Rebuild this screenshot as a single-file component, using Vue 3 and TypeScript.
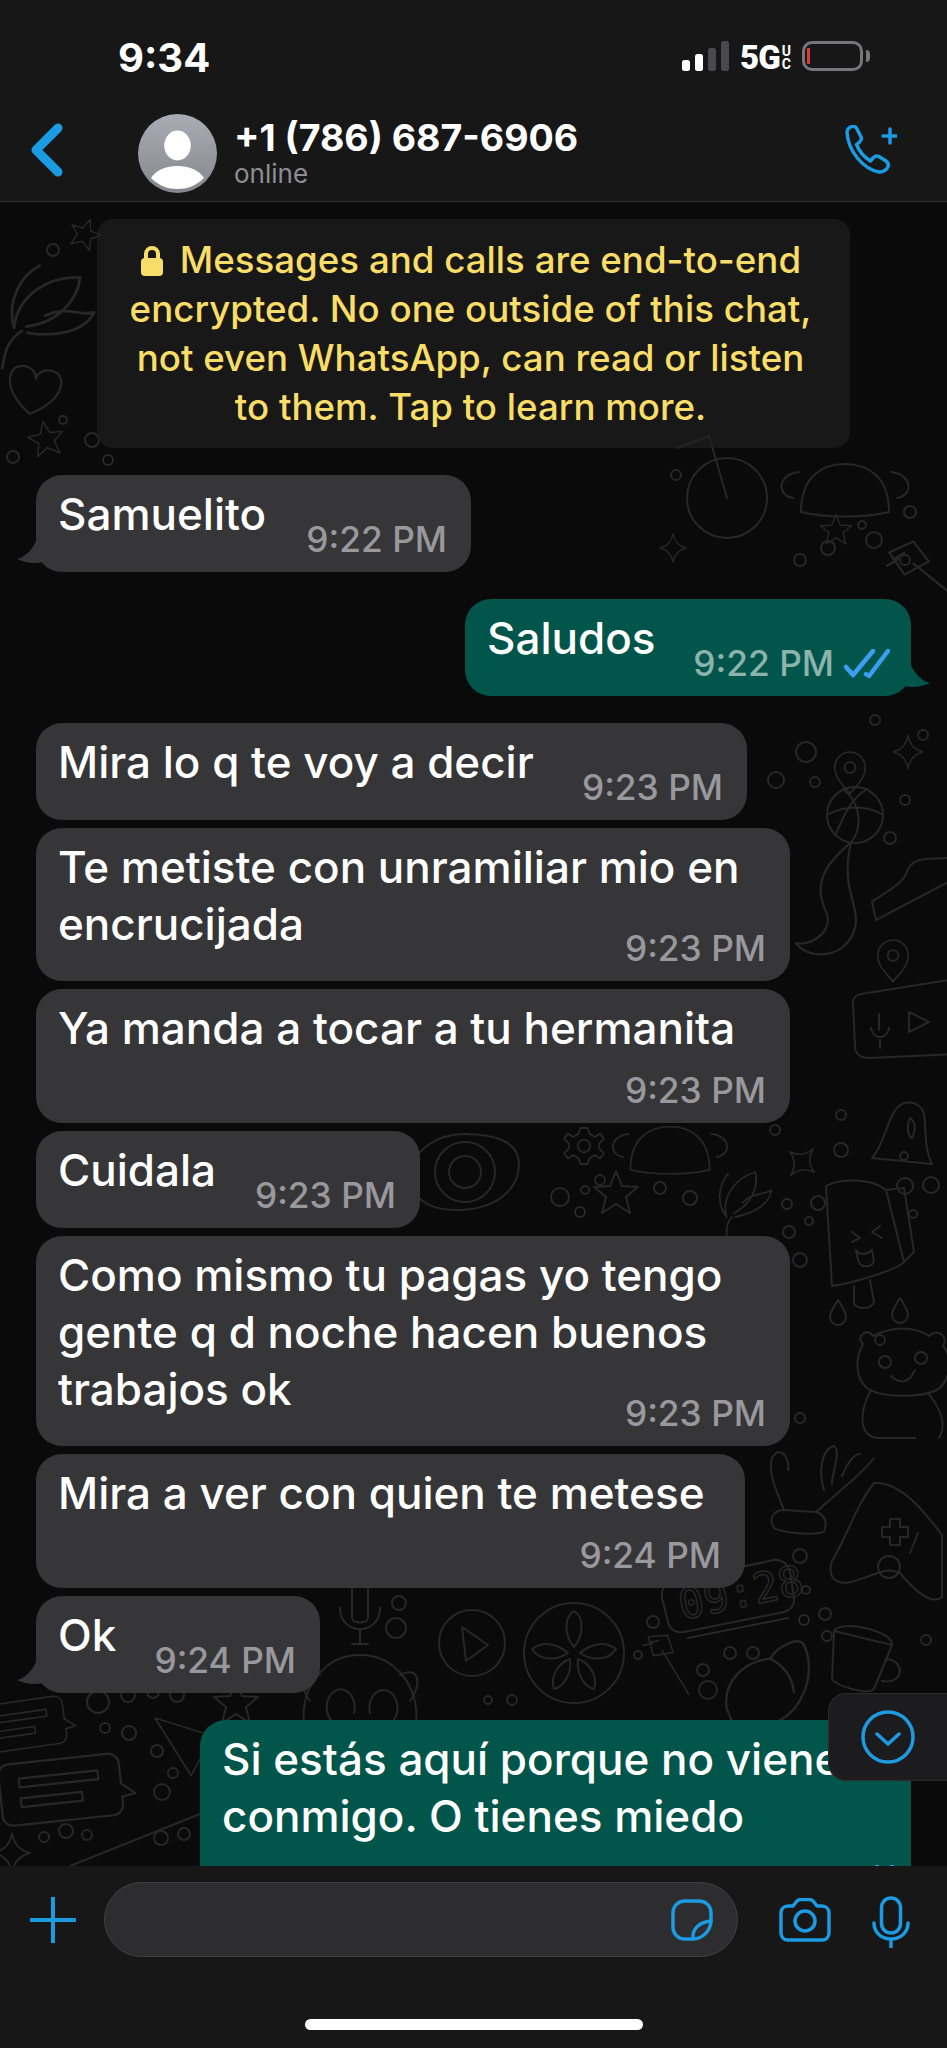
<template>
  <div class="phone">
    <header class="top">
      <div class="status">
        <span class="clock">9:34</span>
        <div class="signal">
          <i class="bar on b1"></i><i class="bar on b2"></i><i class="bar b3"></i><i class="bar b4"></i>
        </div>
        <span class="net">5G</span>
        <span class="uc"><b>U</b><b>C</b></span>
        <div class="battery"><i class="charge"></i></div>
        <i class="nub"></i>
      </div>
      <div class="nav">
        <svg class="back" viewBox="0 0 33 54"><path d="M28 5 L6 27 L28 49" /></svg>
        <svg class="avatar" viewBox="0 0 79 79">
          <defs>
            <linearGradient id="av" x1="0" y1="0" x2="0" y2="1">
              <stop offset="0" stop-color="#a9acb4" />
              <stop offset="1" stop-color="#85878e" />
            </linearGradient>
          </defs>
          <circle cx="39.5" cy="39.5" r="39.5" fill="url(#av)" />
          <ellipse cx="39.5" cy="31.5" rx="13.3" ry="15" fill="#fff" />
          <path d="M13 64 C18 56 28 52 39.5 52 C51 52 61 56 66 64 C58 72 49 75 39.5 75 C30 75 21 72 13 64Z" fill="#fff" />
        </svg>
        <div class="who">
          <div class="name">+1 (786) 687-6906</div>
          <div class="online">online</div>
        </div>
        <svg class="call" viewBox="0 0 52 50">
          <path d="M2 7 C2 4 5 2 7 1.500 C9 1 11 2 12 4 L16 12 C17 14 16 16 14 17.500 L11.500 19.500 C14 26 19 32 25.500 36 L28.500 32.500 C30 31 32 30.500 34 31.500 L41 36 C43 37.500 44 39 43 41.500 C42 44.500 38 47.500 34 47 C18 44 3 26 2 7Z" />
          <path d="M38 11 H52 M45 4 V18" />
        </svg>
      </div>
    </header>

    <main class="chat">
      <svg class="wall" viewBox="0 202 947 1664" preserveAspectRatio="none">
        <path v-for="(d, i) in doodles" :key="i" :d="shapes[d.s]" :transform="`translate(${d.x} ${d.y}) rotate(${d.r ?? 0}) scale(${d.k ?? 1})`" />
        <circle v-for="(c, i) in dots" :key="'c' + i" :cx="c[0]" :cy="c[1]" :r="c[2]" />
        <text class="wall-time" transform="translate(682 1620) rotate(-12)">09:28</text>
      </svg>

      <div class="notice">
        <svg class="lock" viewBox="0 0 24 30"><path d="M6 13 V8 A6 6 0 0 1 18 8 V13" /><rect x="1" y="12" width="22" height="18" rx="4" /></svg>
        Messages and calls are end-to-end<br>encrypted. No one outside of this chat,<br>not even WhatsApp, can read or listen<br>to them. Tap to learn more.
      </div>

      <div
        v-for="(m, i) in messages"
        :key="i"
        class="bubble"
        :class="[m.out ? 'out' : 'in', m.mode, { grouped: m.grouped }]"
        :style="{ width: m.width + 'px' }"
      >
        <svg v-if="m.tail" class="tail" viewBox="0 0 32 40"><path d="M22 0 C22 16 12 30 0 33 C10 38 24 38 32 34 Z" /></svg>
        <div class="text" v-html="m.text"></div>
        <div v-if="m.time" class="time">
          {{ m.time }}
          <svg v-if="m.out" class="ticks" viewBox="0 0 46 30"><path d="M2 18 L9 26 L29 2 M22 25 L25 27 L44 2" /></svg>
        </div>
        <svg v-if="m.mode === 'cut'" class="ticks cut-ticks" viewBox="0 0 46 30"><path d="M2 18 L9 26 L29 2 M22 25 L25 27 L44 2" /></svg>
      </div>

      <div class="scroll-down">
        <svg viewBox="0 0 54 54"><circle cx="27" cy="27" r="25" /><path d="M16 24 L27 34 L38 24" /></svg>
      </div>
    </main>

    <footer class="bottom">
      <div class="compose">
        <svg class="plus" viewBox="0 0 46 46"><path d="M23 1 V45 M1 23 H45" /></svg>
        <div class="field">
          <svg class="sticker" viewBox="0 0 42 42"><path d="M14 2 H28 C35 2 40 7 40 14 V21 C40 32 31 40 22 40 H14 C7 40 2 35 2 28 V14 C2 7 7 2 14 2Z" /><path d="M22 40 C21 30 28 23 40 22" /></svg>
        </div>
        <svg class="camera" viewBox="0 0 52 44"><path d="M9 8 H14 L18 3 C19 2 20 1.500 22 1.500 H30 C32 1.500 33 2 34 3 L38 8 H43 C47 8 50 11 50 15 V35 C50 39 47 42 43 42 H9 C5 42 2 39 2 35 V15 C2 11 5 8 9 8Z" /><circle cx="26" cy="23" r="10" /></svg>
        <svg class="mic" viewBox="0 0 38 52"><rect x="9.500" y="2" width="19" height="35" rx="9.500" /><path d="M2 27 C2 37 10 43 19 43 C28 43 36 37 36 27 M19 43 V51" /></svg>
      </div>
      <div class="home"></div>
    </footer>
  </div>
</template>

<script setup lang="ts">
interface Message {
  text: string
  time?: string
  width: number
  out?: boolean
  mode: 'inline' | 'below' | 'overlap' | 'cut'
  grouped?: boolean
  tail?: boolean
}

interface Doodle {
  s: string
  x: number
  y: number
  r?: number
  k?: number
}

const messages: Message[] = [
  { text: 'Samuelito', time: '9:22 PM', width: 435, mode: 'inline', tail: true },
  { text: 'Saludos', time: '9:22 PM', width: 446, out: true, mode: 'inline', tail: true },
  { text: 'Mira lo q te voy a decir', time: '9:23 PM', width: 711, mode: 'inline' },
  { text: 'Te metiste con unramiliar mio en<br>encrucijada', time: '9:23 PM', width: 754, mode: 'overlap', grouped: true },
  { text: 'Ya manda a tocar a tu hermanita', time: '9:23 PM', width: 754, mode: 'below', grouped: true },
  { text: 'Cuidala', time: '9:23 PM', width: 384, mode: 'inline', grouped: true },
  { text: 'Como mismo tu pagas yo tengo<br>gente q d noche hacen buenos<br>trabajos ok', time: '9:23 PM', width: 754, mode: 'overlap', grouped: true },
  { text: 'Mira a ver con quien te metese', time: '9:24 PM', width: 709, mode: 'below', grouped: true },
  { text: 'Ok', time: '9:24 PM', width: 284, mode: 'inline', grouped: true, tail: true },
  { text: 'Si estás aquí porque no vienes<br>conmigo. O tienes miedo', width: 711, out: true, mode: 'cut' },
]

// chat wallpaper, drawn in page coordinates
const shapes: Record<string, string> = {
  star: 'M0-22 L6-7 L22-6 L10 4 L14 20 L0 11 L-14 20 L-10 4 L-22-6 L-6-7Z',
  spark: 'M0-22 Q3-4 20 0 Q3 4 0 22 Q-3 4 -20 0 Q-3-4 0-22Z',
  pin: 'M0 24 C-8 14 -17 7 -17 -5 A17 17 0 0 1 17 -5 C17 7 8 14 0 24Z M6 -5 A6 6 0 1 1 -6 -5 A6 6 0 1 1 6 -5Z',
  heart: 'M0 22 C-30 4 -28 -20 -12 -20 C-5 -20 0 -15 0 -10 C0 -15 5 -20 12 -20 C28 -20 30 4 0 22Z',
  drop: 'M0-12 C5-4 8 0 8 5 A8 8 0 0 1 -8 5 C-8 0 -5-4 0-12Z',
  chat: 'M-50-26 H40 C46-26 50-22 50-16 V2 L62 12 L50 14 V20 C50 26 46 30 40 30 H-50 C-56 30 -60 26 -60 20 V-16 C-60-22 -56-26 -50-26Z M-42-12 H30 V-4 H-42Z M-42 6 H14 V14 H-42Z',
  wheel: 'M40 0 A40 40 0 1 1 -40 0 A40 40 0 1 1 40 0Z M0 0 L-18 -62 M-18 -62 L-50 -50',
  dome: 'M-44 22 C-44-14 -22-26 0-26 C22-26 44-14 44 22 C20 28 -20 28 -44 22Z M-52 8 C-70 4 -66-16 -46-18 M52 8 C70 4 66-16 46-18',
  ball: 'M28 0 A28 28 0 1 1 -28 0 A28 28 0 1 1 28 0Z M-28 0 C-10-10 12-10 28 0 M-12-26 C6-12 8 12 -4 28 M12-26 C-8-14 -14 10 -20 20',
  shoe: 'M-36 36 L36-2 L36-26 C20-24 0-30 -6-10 C-12 2 -30 10 -40 18 Z',
  voice: 'M-44-28 L56-44 V32 L-36 36 C-44 36 -50 32 -50 24 L-52-20 C-52-24 -48-28 -44-28Z M-26-8 V8 M-34 6 C-32 18 -18 18 -16 6 M-25 18 V26 M4-10 L24 0 L4 10Z',
  popsicle: 'M-36-54 C-22-62 10-62 24-50 L42 22 C36 30 -14 44 -30 46 Z M24-50 L42-52 L52 12 L42 22 M-8 46 V62 C-8 70 10 70 12 62 L8 40 M-10 -8 L-2 -2 L-10 2 M18-14 L10-8 L20-2 M-6 10 C-2 16 6 14 10 10 L12 22 C8 28 -2 28 -4 20Z',
  cat: 'M-42-36 C-50-42 -38-54 -32-44 C-12-54 10-54 24-44 C32-52 44-44 38-34 C48-22 46 0 32 10 C16 18 -24 18 -38 8 C-50-2 -50-22 -42-36Z M-20-24 A6 6 0 1 1 -20.100-24Z M16-28 A6 6 0 1 1 15.900-28Z M-14-4 C-6 4 4 4 10-10 M-34 10 C-48 36 -44 56 -28 58 H10 M24 14 C36 30 42 44 34 58',
  lemon: 'M50 0 A50 50 0 1 1 -50 0 A50 50 0 1 1 50 0Z M0-6 C-10-18 -10-36 0-42 C10-36 10-18 0-6Z M6 0 C18-10 32-12 42-4 C34 8 18 8 6 0Z M-6 0 C-18-10 -32-12 -42-4 C-34 8 -18 8 -6 0Z M4 6 C16 10 24 24 20 36 C10 34 2 20 4 6Z M-4 6 C-16 10 -24 24 -20 36 C-10 34 -2 20 -4 6Z',
  play: 'M33 0 A33 33 0 1 1 -33 0 A33 33 0 1 1 33 0Z M-10-16 L16 2 L-6 18Z',
  alarm: 'M-58-22 L46-44 C54-45 60-40 62-32 L66-6 C67 2 62 6 56 8 L-44 28 C-52 29 -58 26 -60 18 L-66-6 C-67-14 -64-20 -58-22Z M-40 34 L60 14',
  pad: 'M-16-62 C10-64 34-34 52-10 V52 C40 62 20 40 10 28 C-6 20 -20 34 -44 38 C-58 38 -62 28 -58 16 C-44-6 -34-40 -16-62Z M-8-18 H0 V-26 H10 V-18 H18 V-8 H10 V0 H0 V-8 H-8Z M28-12 L20 8 M10 22 A11 11 0 1 1 -12 22 A11 11 0 1 1 10 22Z',
  mug: 'M-26-24 L32-10 L14 34 C8 40 -22 32 -28 24 Z M-26-24 C-20-36 34-24 32-10 M26 4 C44 4 46 30 22 26',
  hand: 'M-36 40 C-46 40 -52 48 -46 58 C-40 62 -10 66 4 62 C8 52 4 44 -4 42 L-36 40 M-36 40 C-46 16 -52 0 -48-12 C-40-26 -30-12 -32 0 M-4 42 C20 20 40 6 54-12 M4 20 C-2 2 2-22 14-24 C22-18 10 10 12 14 M22 6 C28-8 34-16 40-16',
  flower: 'M-24 30 C-30 6 -12-14 8-20 C12-4 4 16 -16 26 M-24 30 C-36 14 -32-8 -22-18 M-6 14 C6 2 18 6 26 0 C24 16 6 26 -14 30 M-18 30 C-26 40 -24 50 -22 60',
  gear: 'M-4-20 H4 L6-14 L12-10 L18-14 L22-8 L17-3 V3 L22 8 L18 14 L12 10 L6 14 L4 20 H-4 L-6 14 L-12 10 L-18 14 L-22 8 L-17 3 V-3 L-22-8 L-18-14 L-12-10 L-6-14Z M7 0 A7 7 0 1 1 -7 0 A7 7 0 1 1 7 0Z',
  bell: 'M-30 28 C-20 18 -16-4 -8-18 C0-32 18-30 22-16 C24-2 22 18 30 34 Z M8-12 C4-2 6 6 10 8 C14 0 14-8 8-12Z',
  donut: 'M54-8 C54 18 30 38 -8 38 C-40 38 -54 24 -54 4 C-54-20 -30-38 0-38 C30-38 54-30 54-8Z M30 0 A30 30 0 1 1 -30 0 A30 30 0 1 1 30 0Z M16 0 A16 16 0 1 1 -16 0 A16 16 0 1 1 16 0Z',
  plane: 'M-30-30 L34-10 L10 34 Z M-30-30 L10 34',
  brush: 'M-28-34 L-6-44 L8-26 L-14-14Z M-6-24 L44 16 M-20-28 L-30-22 M-14-34 L-24-28',
  tentacle: 'M10-58 C-6-44 -26-26 -14 2 C-4 20 -22 36 -40 34 C-28 50 8 48 14 18 C18 0 0-16 10-58Z',
  shell: 'M-36 20 C-40-4 -20-20 0-22 C8-34 24-40 28-34 C34-22 36 0 20 20 C8 34 -16 40 -30 34Z M0-22 C8-18 18-10 20 6',
  mic: 'M-8-24 H8 V8 C8 14 -8 14 -8 8Z M-20 -2 C-20 26 20 26 20 -2 M0 20 V34 M-8 34 H8',
  monkey: 'M-56 30 C-60-10 -34-40 0-40 C34-40 60-10 56 30 M-40-20 C-60-30 -62-10 -50 6 M40-20 C60-30 62-10 50 6 M-22 30 A14 18 0 1 1 -6 18 M10 18 A14 18 0 1 1 28 30',
  line: 'M-65 26 L65-26',
}

const doodles: Doodle[] = [
  { s: 'star', x: 85, y: 234, r: 20, k: 0.7 },
  { s: 'heart', x: 34, y: 390, k: 1.1, r: 10 },
  { s: 'star', x: 46, y: 439, k: 0.8, r: -10 },
  { s: 'flower', x: 60, y: 300, k: 1.4, r: 20 },
  { s: 'wheel', x: 727, y: 498 },
  { s: 'dome', x: 845, y: 490 },
  { s: 'star', x: 836, y: 530, k: 0.7 },
  { s: 'brush', x: 920, y: 590, k: 1.1 },
  { s: 'spark', x: 673, y: 548, k: 0.65 },
  { s: 'spark', x: 908, y: 752, k: 0.75 },
  { s: 'pin', x: 850, y: 772, k: 0.9 },
  { s: 'ball', x: 855, y: 815 },
  { s: 'shoe', x: 912, y: 884 },
  { s: 'tentacle', x: 840, y: 906, k: 1.1 },
  { s: 'pin', x: 893, y: 960, k: 0.9 },
  { s: 'voice', x: 905, y: 1022 },
  { s: 'bell', x: 902, y: 1130, k: 1 },
  { s: 'dome', x: 670, y: 1150, k: 0.9 },
  { s: 'gear', x: 584, y: 1146, k: 0.9 },
  { s: 'star', x: 616, y: 1193, k: 1 },
  { s: 'spark', x: 802, y: 1162, r: 40, k: 0.8 },
  { s: 'donut', x: 465, y: 1172 },
  { s: 'flower', x: 748, y: 1190, k: 0.9 },
  { s: 'popsicle', x: 862, y: 1240 },
  { s: 'drop', x: 838, y: 1312 },
  { s: 'drop', x: 900, y: 1310 },
  { s: 'cat', x: 905, y: 1380 },
  { s: 'hand', x: 820, y: 1470 },
  { s: 'pad', x: 890, y: 1545 },
  { s: 'alarm', x: 728, y: 1604 },
  { s: 'lemon', x: 574, y: 1653 },
  { s: 'play', x: 472, y: 1643 },
  { s: 'mug', x: 860, y: 1655 },
  { s: 'shell', x: 770, y: 1685, k: 1.2 },
  { s: 'brush', x: 660, y: 1670, k: 0.8, r: 20 },
  { s: 'chat', x: 22, y: 1723, k: 0.85, r: -8 },
  { s: 'chat', x: 66, y: 1787, k: 1.1, r: -6 },
  { s: 'plane', x: 182, y: 1745, k: 0.9 },
  { s: 'line', x: 135, y: 1840 },
  { s: 'spark', x: 12, y: 1853, k: 0.9 },
  { s: 'mic', x: 360, y: 1610 },
  { s: 'monkey', x: 360, y: 1695 },
  { s: 'star', x: 236, y: 1703, k: 1 },
]

const dots: number[][] = [
  [53, 250, 6], [92, 440, 7], [13, 457, 6], [63, 420, 4], [108, 460, 5], [828, 548, 7], [800, 560, 6], [874, 540, 8],
  [862, 525, 4], [676, 475, 5], [910, 512, 6], [905, 560, 5], [893, 686, 6], [875, 720, 5], [806, 752, 10], [776, 780, 8],
  [815, 782, 5], [905, 800, 5], [890, 838, 6], [923, 735, 5], [775, 1130, 5], [600, 1180, 5], [560, 1197, 9],
  [585, 1190, 4], [660, 1188, 6], [690, 1198, 7], [580, 1212, 5], [787, 1204, 5], [818, 1203, 7], [789, 1232, 6],
  [809, 1221, 4], [904, 1156, 4], [841, 1115, 5], [841, 1150, 7], [905, 1186, 8], [931, 1185, 8], [913, 1214, 4],
  [800, 1260, 7], [800, 1418, 5], [880, 1340, 5], [800, 1556, 7], [806, 1590, 4], [804, 1620, 5], [825, 1614, 6],
  [827, 1636, 5], [653, 1622, 6], [638, 1655, 4], [703, 1670, 6], [730, 1653, 6], [753, 1653, 6], [708, 1690, 9],
  [512, 1700, 5], [488, 1700, 4], [926, 1640, 5], [98, 1702, 11], [128, 1695, 7], [153, 1692, 6], [177, 1695, 7],
  [105, 1728, 5], [129, 1733, 7], [157, 1751, 6], [173, 1773, 5], [162, 1792, 8], [44, 1837, 5], [66, 1831, 7],
  [87, 1835, 5], [161, 1838, 7], [184, 1834, 6], [399, 1603, 7], [396, 1628, 10],
]
</script>

<style>
html,
body {
  background: #0a0a0a;
}
</style>

<style scoped>
.phone {
  width: 947px;
  height: 2048px;
  display: flex;
  flex-direction: column;
  background: #0a0a0a;
  font-family: Inter, "Noto Sans", sans-serif;
  color: #fff;
  overflow: hidden;
}

.top {
  background: #171717;
  border-bottom: 1px solid #2c2c2e;
  flex-shrink: 0;
}

.status {
  height: 85px;
  box-sizing: border-box;
  padding: 38px 0 0 118px;
  display: flex;
  align-items: flex-start;
}

.clock {
  font-size: 40px;
  line-height: 40px;
  font-weight: 700;
  width: 564px;
}

.signal {
  display: flex;
  align-items: flex-end;
  gap: 5px;
  height: 30px;
  margin-top: 3px;
}

.bar {
  width: 8px;
  border-radius: 2.500px;
  background: #4a4a4c;
}

.bar.on { background: #fff; }
.b1 { height: 11px; }
.b2 { height: 17px; }
.b3 { height: 23px; }
.b4 { height: 30px; }

.net {
  margin-left: 11px;
  font-family: Roboto, sans-serif;
  font-weight: 900;
  font-size: 33px;
  line-height: 28px;
  margin-top: 6px;
  letter-spacing: -1px;
}

.uc {
  display: flex;
  flex-direction: column;
  margin: 7px 0 0 2px;
  font-family: Roboto, sans-serif;
  font-size: 14px;
  line-height: 13px;
}

.battery {
  width: 61px;
  height: 30px;
  box-sizing: border-box;
  margin: 3px 0 0 11px;
  border: 3px solid #77777a;
  border-radius: 10px;
  padding: 4px 2px;
  display: flex;
}

.charge {
  width: 3px;
  background: #e23b32;
  border-radius: 1px;
}

.nub {
  width: 4px;
  height: 12px;
  margin: 12px 0 0 3px;
  background: #77777a;
  border-radius: 0 4px 4px 0;
}

.nav {
  height: 116px;
  box-sizing: border-box;
  padding: 20px 50px 0 30px;
  display: flex;
  align-items: center;
}

.back {
  width: 33px;
  height: 54px;
  margin-top: -6px;
  fill: none;
  stroke: #1a9be2;
  stroke-width: 9;
  stroke-linecap: round;
  stroke-linejoin: round;
}

.avatar {
  width: 79px;
  height: 79px;
  margin-left: 75px;
}

.who {
  margin-left: 17px;
}

.name {
  font-size: 37.5px;
  line-height: 40px;
  font-weight: 700;
  margin-bottom: 1px;
}

.online {
  font-size: 26px;
  line-height: 30px;
  color: #8e8e93;
}

.call {
  width: 52px;
  height: 50px;
  margin: -6px 0 0 auto;
  fill: none;
  stroke: #1a9be2;
  stroke-width: 3.500;
  stroke-linecap: round;
  stroke-linejoin: round;
}

.chat {
  position: relative;
  flex: 1;
  min-height: 0;
  overflow: hidden;
  padding: 17px 36px 0;
  display: flex;
  flex-direction: column;
  align-items: flex-start;
  box-sizing: border-box;
}

.wall {
  position: absolute;
  inset: 0;
  width: 100%;
  height: 100%;
  fill: none;
  stroke: #272727;
  stroke-width: 2;
  stroke-linecap: round;
  stroke-linejoin: round;
}

.wall-time {
  font-family: "DejaVu Sans Mono", monospace;
  font-size: 42px;
  fill: none;
  stroke: #272727;
  stroke-width: 1.500;
}

.notice {
  position: relative;
  align-self: center;
  width: 753px;
  height: 229px;
  flex-shrink: 0;
  box-sizing: border-box;
  padding: 16px 6px 0 0;
  background: rgba(34, 34, 34, 0.6);
  border-radius: 16px;
  color: #f8de68;
  font-size: 36.7px;
  font-weight: 500;
  line-height: 49px;
  text-align: center;
  white-space: nowrap;
}

.lock {
  width: 24px;
  height: 30px;
  margin-right: 6px;
  vertical-align: -3px;
}

.lock path {
  fill: none;
  stroke: #f8de68;
  stroke-width: 4;
}

.lock rect { fill: #f8de68; }

.bubble {
  position: relative;
  box-sizing: border-box;
  margin-top: 27px;
  padding: 11px 24px 13px 22px;
  border-radius: 26px;
  background: #363638;
  display: flex;
  flex-direction: column;
  flex-shrink: 0;
}

.bubble.grouped { margin-top: 8px; }
.bubble.out {
  align-self: flex-end;
  background: #02554a;
  padding-right: 21px;
}

.bubble.inline {
  flex-direction: row;
  align-items: flex-end;
  justify-content: space-between;
}

.bubble.inline .text { padding-bottom: 16px; }
.bubble.below .time { margin-top: 15px; }
.bubble.overlap .time { margin-top: -23px; }

.text {
  font-size: 44px;
  font-weight: 500;
  line-height: 57px;
  white-space: nowrap;
}

.time {
  align-self: flex-end;
  display: flex;
  align-items: center;
  font-size: 35.3px;
  font-weight: 500;
  line-height: 38px;
  color: #98989d;
}

.out .time { color: #8db3ad; }

.ticks {
  width: 46px;
  height: 30px;
  margin-left: 10px;
  fill: none;
  stroke: #3a9ff2;
  stroke-width: 4.500;
  stroke-linecap: round;
  stroke-linejoin: round;
}

.cut-ticks {
  position: absolute;
  top: 145px;
  right: 17px;
}

.tail {
  position: absolute;
  left: -19px;
  bottom: 6px;
  width: 32px;
  height: 40px;
  fill: #363638;
}

.out .tail {
  left: auto;
  right: -19px;
  transform: scaleX(-1);
  fill: #02554a;
}

.bubble.cut { height: 240px; }

.scroll-down {
  position: absolute;
  right: 0;
  top: 1491px;
  width: 119px;
  height: 88px;
  box-sizing: border-box;
  background: #1c1c1e;
  border: 1px solid #2c2c2e;
  border-right: 0;
  border-radius: 18px 0 0 18px;
  display: flex;
  align-items: center;
  padding-left: 32px;
}

.scroll-down svg {
  width: 54px;
  height: 54px;
  fill: none;
  stroke: #1e9be0;
  stroke-width: 3.500;
  stroke-linecap: round;
  stroke-linejoin: round;
}

.bottom {
  flex-shrink: 0;
  height: 182px;
  box-sizing: border-box;
  background: #171717;
  padding-top: 16px;
  display: flex;
  flex-direction: column;
  align-items: center;
}

.compose {
  width: 100%;
  height: 75px;
  box-sizing: border-box;
  padding-left: 30px;
  display: flex;
  align-items: center;
}

.plus {
  width: 46px;
  height: 46px;
  fill: none;
  stroke: #1a9be2;
  stroke-width: 4;
  stroke-linecap: round;
}

.field {
  width: 634px;
  height: 75px;
  box-sizing: border-box;
  margin-left: 28px;
  background: #2d2d2f;
  border: 1px solid #414143;
  border-radius: 38px;
  display: flex;
  align-items: center;
  justify-content: flex-end;
  padding-right: 24px;
}

.sticker {
  width: 42px;
  height: 42px;
  fill: none;
  stroke: #1a9be2;
  stroke-width: 3.500;
  stroke-linecap: round;
  stroke-linejoin: round;
}

.camera {
  width: 52px;
  height: 44px;
  margin-left: 41px;
  fill: none;
  stroke: #1a9be2;
  stroke-width: 3.500;
  stroke-linejoin: round;
}

.mic {
  width: 38px;
  height: 52px;
  margin: 5px 0 0 41px;
  fill: none;
  stroke: #1a9be2;
  stroke-width: 3.500;
  stroke-linecap: round;
}

.home {
  width: 338px;
  height: 11px;
  margin-top: 62px;
  border-radius: 6px;
  background: #fff;
}
</style>
